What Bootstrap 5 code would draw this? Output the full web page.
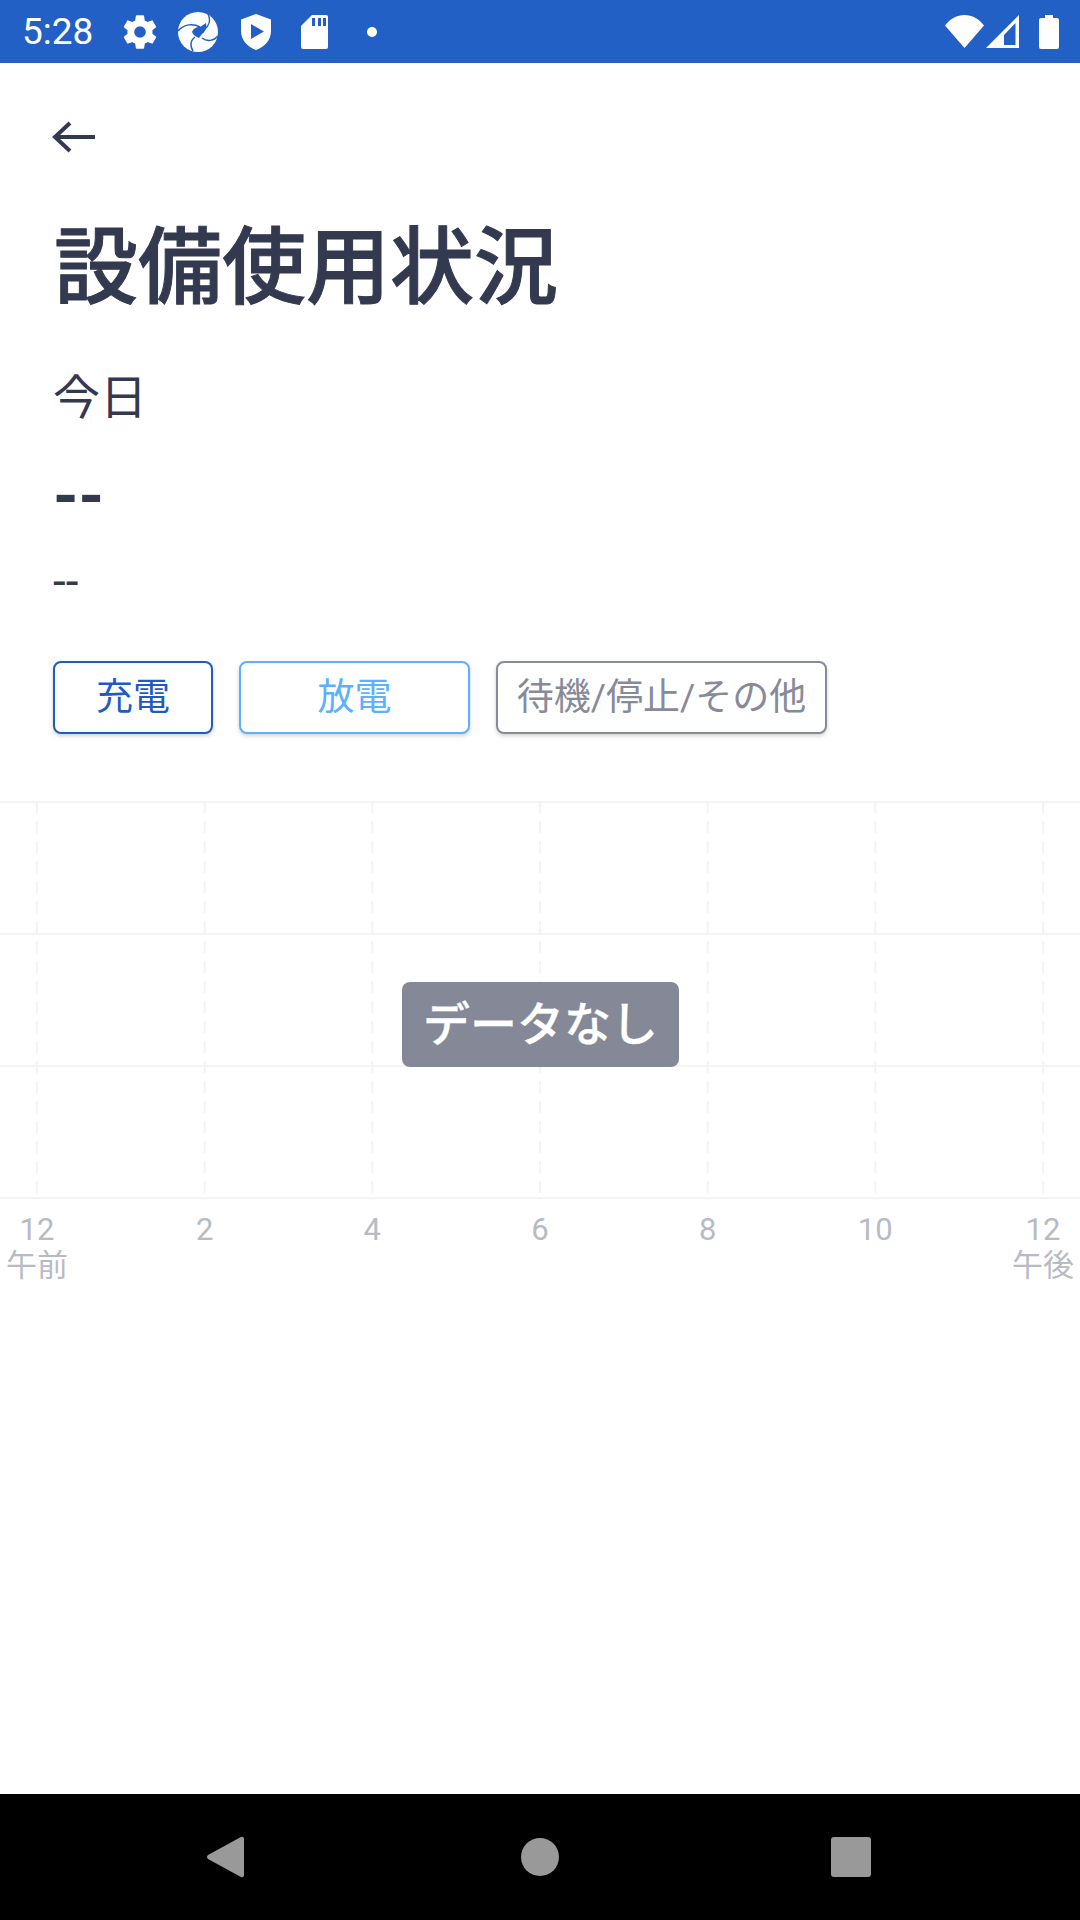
<!DOCTYPE html>
<html lang="ja">
<head>
  <meta charset="UTF-8">
  <meta name="viewport" content="width=device-width, initial-scale=1.0">
  <title>設備使用状況</title>
  <link href="https://cdn.jsdelivr.net/npm/bootstrap@5.3.0/dist/css/bootstrap.min.css" rel="stylesheet">
  <style>
    html, body { height: 100%; }
    body {
      width: 1080px;
      height: 1920px;
      overflow: hidden;
      font-family: Roboto, "Noto Sans CJK JP", sans-serif;
      color: #333a50;
      background: #fff;
    }
    .status-bar { height: 63px; background: #2360c6; color: #fff; padding: 0 21px 0 22px; }
    .status-time { font-size: 37px; line-height: 1; width: 98px; }
    .status-left svg { display: block; flex: none; }
    .page-body { height: 1731px; }
    .page-head { padding: 58px 0 0 52px; }
    .back-arrow { display: block; height: 32px; }
    .page-title { font-size: 84px; font-weight: 500; line-height: 1.2; margin: 66px 0 0 2px; color: #333a50; -webkit-text-stroke: 1px #333a50; }
    .day-label { font-size: 47px; line-height: 1.2; margin: 50px 0 0 1px; }
    .value-main { font-size: 65px; font-weight: 700; line-height: 1.2; margin: 31px 0 0 1px; }
    .value-sub { font-size: 46px; line-height: 1.2; margin: 19px 0 0 1px; }
    .filter-row { margin-top: 52px; gap: 26px; padding-left: 1px; }
    .filter-btn {
      height: 73px;
      padding: 0 0 1px;
      border-width: 2px;
      border-style: solid;
      border-radius: 8px;
      background: #fff;
      font-size: 37px;
      line-height: 1;
      box-shadow: 0 2px 4px rgba(0,0,0,.18);
    }
    .filter-charge { width: 160px; color: #1f5bc4; border-color: #1f5bc4; }
    .filter-discharge { width: 231px; color: #5cb0ff; border-color: #5cb0ff; }
    .filter-other { width: 331px; color: #868a99; border-color: #868a99; }
    .chart-wrap { margin-top: 67px; }
    .chart-area { height: 398px; }
    .chart-area svg { display: block; }
    .no-data {
      left: 402px;
      top: 181px;
      width: 277px;
      height: 85px;
      background: #858997;
      color: #fff;
      border-radius: 8px;
      font-size: 47px;
      font-weight: 500;
      -webkit-text-stroke: .3px #fff;
    }
    .tick-row { padding: 0 7px; margin-top: 15px; color: #b8bbc4; }
    .tick-item { width: 60px; text-align: center; font-size: 31px; line-height: 32px; }
    .tick-sub { font-size: 31px; line-height: 32px; margin: 4px -4px 0; }
    .nav-bar { height: 126px; background: #000; }
    .nav-inner { height: 100%; }
    .nav-inner svg { position: absolute; }
  </style>
</head>
<body>
  <div class="status-bar d-flex align-items-center justify-content-between">
    <div class="d-flex align-items-center status-left">
      <span class="status-time">5:28</span>
      <!-- gear -->
      <svg width="40" height="40" viewBox="0 0 24 24" fill="#fff" style="margin-right:18px"><path d="M19.4 13c.04-.32.1-.66.1-1s-.06-.68-.1-1l2.1-1.64c.2-.15.24-.42.12-.64l-2-3.46c-.12-.22-.38-.3-.6-.22l-2.5 1a7.3 7.3 0 0 0-1.7-1l-.37-2.62A.5.5 0 0 0 14 2h-4a.5.5 0 0 0-.5.42L9.13 5.04c-.6.26-1.17.6-1.7 1l-2.5-1c-.22-.08-.48 0-.6.22l-2 3.46c-.12.22-.08.5.12.64L4.55 11c-.04.32-.1.66-.1 1s.06.68.1 1l-2.1 1.64c-.2.15-.24.42-.12.64l2 3.46c.12.22.38.3.6.22l2.5-1c.53.4 1.1.74 1.7 1l.37 2.62c.04.24.25.42.5.42h4c.25 0 .46-.18.5-.42l.37-2.62c.6-.26 1.17-.6 1.7-1l2.5 1c.22.08.48 0 .6-.22l2-3.46c.12-.22.08-.5-.12-.64L19.4 13zM12 15.500a3.500 3.500 0 1 1 0-7 3.500 3.500 0 0 1 0 7z"/></svg>
      <!-- shutter logo -->
      <svg width="40" height="40" viewBox="0 0 40 40" style="margin-right:23px"><circle cx="20" cy="20" r="20" fill="#fff"/><path d="M14 20c1-3 4-5 8-5l6-4c1 5-1 9-4 11l-3 4c-3-1-6-3-7-6z" fill="#2360c6"/><path d="M0 19C6 12 15 11 22 15M30 2c3 6 1 12-4 16M40 24c-4 5-11 6-16 2M15 39c-3-5-3-10 2-14" fill="none" stroke="#2360c6" stroke-width="1.500"/></svg>
      <!-- shield play -->
      <svg width="30" height="36" viewBox="0 0 30 36" style="margin-right:30px"><path d="M15 0 30 5.500V17c0 9-6.500 16-15 19C6.500 33 0 26 0 17V5.500z" fill="#fff"/><path d="M10 10 23 17.500 10 25z" fill="#2360c6"/></svg>
      <!-- sd card -->
      <svg width="27" height="34" viewBox="0 0 27 34" style="margin-right:39px"><path d="M11 0h14a2 2 0 0 1 2 2v30a2 2 0 0 1-2 2H2a2 2 0 0 1-2-2V11z" fill="#fff"/><path d="M11 3h3v8h-3zM17 3h3v8h-3zM22 3h3v8h-3z" fill="#2360c6"/></svg>
      <svg width="10" height="10" viewBox="0 0 10 10"><circle cx="5" cy="5" r="5" fill="#fff"/></svg>
    </div>
    <div class="d-flex align-items-center">
      <svg width="39" height="33" viewBox="0 0 39 33" style="margin-right:2px"><path d="M0 10.500C5 4 12 0 19.500 0S34 4 39 10.500L19.500 33z" fill="#fff"/></svg>
      <svg width="33" height="33" viewBox="0 0 33 33" style="margin-right:20px"><path fill-rule="evenodd" d="M33 0v33H0zM29.500 8 18 20v10h11.500z" fill="#fff"/></svg>
      <svg width="20" height="34" viewBox="0 0 20 34"><path d="M6 0h8v3h4a2 2 0 0 1 2 2v27a2 2 0 0 1-2 2H2a2 2 0 0 1-2-2V5a2 2 0 0 1 2-2h4z" fill="#fff"/></svg>
    </div>
  </div>

  <div class="page-body">
    <div class="page-head">
      <svg class="back-arrow" width="44" height="32" viewBox="0 0 44 32" fill="none" stroke="#333a50" stroke-width="4"><path d="M43 16H3M18 2 3 16l15 14"/></svg>
      <h1 class="page-title">設備使用状況</h1>
      <div class="day-label">今日</div>
      <div class="value-main">--</div>
      <div class="value-sub">--</div>
      <div class="d-flex filter-row">
        <button type="button" class="btn filter-btn filter-charge">充電</button>
        <button type="button" class="btn filter-btn filter-discharge">放電</button>
        <button type="button" class="btn filter-btn filter-other">待機/停止/その他</button>
      </div>
    </div>

    <div class="chart-wrap">
      <div class="chart-area position-relative">
        <svg width="1080" height="398" viewBox="0 0 1080 398" fill="none">
          <g stroke="#f3f4f6" stroke-width="2">
            <path d="M0 1H1080M0 133H1080M0 265H1080M0 397H1080"/>
            <path stroke-dasharray="12 8" d="M37 0V397M204.700 0V397M372.300 0V397M540 0V397M707.700 0V397M875.300 0V397M1043 0V397"/>
          </g>
        </svg>
        <div class="no-data position-absolute d-flex align-items-center justify-content-center">データなし</div>
      </div>
      <div class="d-flex justify-content-between tick-row">
        <div class="tick-item">12<div class="tick-sub">午前</div></div>
        <div class="tick-item">2</div>
        <div class="tick-item">4</div>
        <div class="tick-item">6</div>
        <div class="tick-item">8</div>
        <div class="tick-item">10</div>
        <div class="tick-item">12<div class="tick-sub">午後</div></div>
      </div>
    </div>
  </div>

  <div class="nav-bar">
    <div class="nav-inner position-relative">
      <svg style="left:207px;top:42px" width="37" height="42" viewBox="0 0 37 42"><path d="M33 1.500c1.500-1.500 4-.7 4 1.500v36c0 2.200-2.500 3-4 1.500L1 23c-1.300-1.200-1.300-2.800 0-4z" fill="#999"/></svg>
      <svg style="left:521px;top:44px" width="38" height="38" viewBox="0 0 38 38"><circle cx="19" cy="19" r="19" fill="#999"/></svg>
      <svg style="left:831px;top:43px" width="40" height="40" viewBox="0 0 40 40"><rect width="40" height="40" rx="3" fill="#999"/></svg>
    </div>
  </div>

  <script src="https://cdn.jsdelivr.net/npm/bootstrap@5.3.0/dist/js/bootstrap.bundle.min.js"></script>
</body>
</html>
